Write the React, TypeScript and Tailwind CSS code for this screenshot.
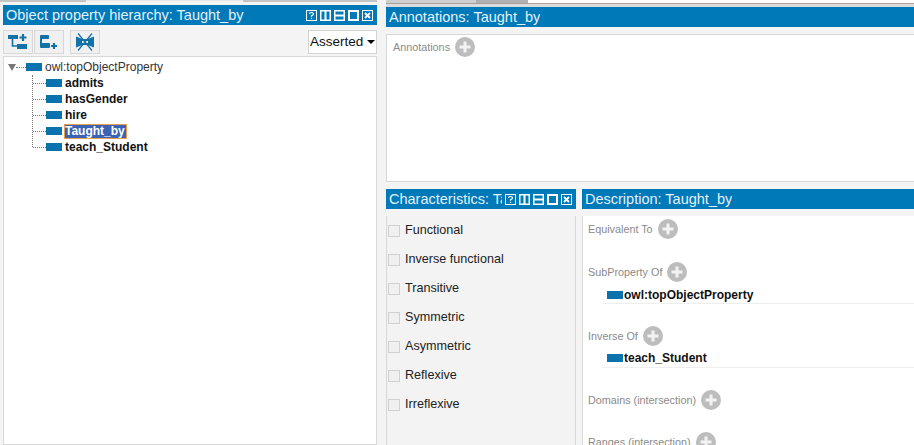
import type { ReactNode } from 'react';

const font = "[font-family:'Liberation_Sans',Arial,sans-serif]";

function PropIcon() {
  return <span className="block w-[16px] h-[8px] bg-[#0a72ad] shrink-0" />;
}

function WindowButtons() {
  return (
    <div className="flex items-center gap-[3px] shrink-0">
      <svg width="11" height="11" viewBox="0 0 11 11">
        <rect x="0.5" y="0.5" width="10" height="10" fill="none" stroke="#fff" />
        <path d="M3.5 4 Q3.5 2.5 5.5 2.5 Q7.5 2.5 7.5 4 Q7.5 5 5.5 5.8 V6.8 M5.5 7.8 V9" fill="none" stroke="#fff" strokeWidth="1.2" />
      </svg>
      <svg width="11" height="11" viewBox="0 0 11 11">
        <rect x="0.75" y="0.75" width="9.5" height="9.5" fill="none" stroke="#fff" strokeWidth="1.5" />
        <rect x="4.5" y="1" width="2" height="9" fill="#fff" />
      </svg>
      <svg width="11" height="11" viewBox="0 0 11 11">
        <rect x="0.75" y="0.75" width="9.5" height="9.5" fill="none" stroke="#fff" strokeWidth="1.5" />
        <rect x="1" y="4.5" width="9" height="2" fill="#fff" />
      </svg>
      <svg width="11" height="11" viewBox="0 0 11 11">
        <rect x="1" y="1" width="9" height="9" fill="none" stroke="#fff" strokeWidth="2" />
      </svg>
      <svg width="11" height="11" viewBox="0 0 11 11">
        <rect x="0.5" y="0.5" width="10" height="10" fill="none" stroke="#fff" />
        <path d="M3 3 L8 8 M8 3 L3 8" stroke="#fff" strokeWidth="1.8" />
      </svg>
    </div>
  );
}

function TitleBar({ title, buttons }: { title: string; buttons?: boolean }) {
  return (
    <div className="h-[20px] bg-[#0079b8] flex items-center justify-between pl-[3px] pr-[4px] gap-[3px] overflow-hidden shrink-0">
      <span className="text-[14.5px] leading-[20px] text-[#e4f1f8] whitespace-nowrap overflow-hidden">{title}</span>
      {buttons && <WindowButtons />}
    </div>
  );
}

function AddButton() {
  return (
    <svg width="20" height="20" viewBox="0 0 20 20" className="shrink-0">
      <circle cx="10" cy="10" r="10" fill="#bdbdbd" />
      <path d="M10 4.5 V15.5 M4.5 10 H15.5" stroke="#f3f3f3" strokeWidth="3" />
    </svg>
  );
}

function SectionLabel({ label }: { label: string }) {
  return (
    <div className="flex items-center gap-[5px] h-[20px]">
      <span className="pt-[1px] text-[10.8px] text-[#8a8a8a] whitespace-nowrap">{label}</span>
      <AddButton />
    </div>
  );
}

function ToolButton({ children }: { children: ReactNode }) {
  return (
    <div className="w-[30px] h-[24px] bg-[#f0f0f0] border border-[#d8d8d8] flex items-center justify-center">
      {children}
    </div>
  );
}

function TreeRow({ label, selected }: { label: string; selected?: boolean }) {
  return (
    <div className="flex items-center h-[16px]">
      <span className="w-[13px] border-t border-dotted border-[#777]" />
      <PropIcon />
      <span
        className={
          selected
            ? 'ml-[2px] pr-[1px] h-[15px] leading-[13px] bg-[#3a62b5] border border-[#e9a04a] text-white font-bold text-[12px]'
            : 'ml-[2px] px-[1px] font-bold text-[12px] leading-[14px] text-[#111]'
        }
      >
        {label}
      </span>
    </div>
  );
}

function AssertionRow({ label, pad }: { label: string; pad: string }) {
  return (
    <div className={`flex items-center h-[22px] ml-[15px] pl-[4px] border-b border-[#eeeeee] ${pad}`}>
      <PropIcon />
      <span className="ml-[1px] text-[12px] font-bold text-[#111] whitespace-nowrap">{label}</span>
    </div>
  );
}

const characteristics = ['Functional', 'Inverse functional', 'Transitive', 'Symmetric', 'Asymmetric', 'Reflexive', 'Irreflexive'];

export default function App() {
  return (
    <div className={`w-[914px] h-[445px] overflow-hidden bg-[#f4f4f4] flex ${font}`}>
      {/* left view */}
      <div className="w-[377px] pl-[3px] flex flex-col shrink-0">
        <div className="h-[5px] flex items-start -ml-[3px] shrink-0">
          <span className="w-[86px] h-[2px] bg-[#c4c4c4]" />
          <span className="w-[157px] h-[1px] bg-[#e8e8e8]" />
          <span className="flex-1 h-[2px] bg-[#c4c4c4]" />
        </div>
        <TitleBar title="Object property hierarchy: Taught_by" buttons />
        <div className="flex items-center justify-between h-[31px] pt-[3px] shrink-0">
          <div className="flex items-center gap-[1px]">
            <ToolButton>
              <svg width="20" height="16" viewBox="0 0 20 16">
                <rect x="0" y="1" width="10" height="4" fill="#1272a8" />
                <path d="M4.5 5 V12 H10" fill="none" stroke="#1272a8" strokeWidth="1.6" />
                <rect x="9" y="10" width="10" height="5" fill="#1272a8" />
                <path d="M15 0 V7 M11.5 3.5 H18.5" stroke="#1272a8" strokeWidth="2.2" />
              </svg>
            </ToolButton>
            <ToolButton>
              <svg width="20" height="16" viewBox="0 0 20 16">
                <rect x="1" y="1" width="9" height="4" rx="1" fill="#1272a8" />
                <path d="M2 3 V11" stroke="#1272a8" strokeWidth="2" />
                <rect x="1" y="9" width="10" height="5" rx="1" fill="#1272a8" />
                <path d="M15 9 V15 M12 12 H18" stroke="#1272a8" strokeWidth="2.2" />
              </svg>
            </ToolButton>
            <div className="ml-[5px]">
              <ToolButton>
                <svg width="18" height="18" viewBox="0 0 18 18">
                  <path d="M1 5 L6 7 H12 L17 5 V13 L12 11 H6 L1 13 Z" fill="none" stroke="#1272a8" strokeWidth="2.2" />
                  <path d="M1 5 V13 L6 11 V7 Z M17 5 V13 L12 11 V7 Z" fill="#1272a8" />
                  <path d="M2 0.5 L16 17.5 M16 0.5 L2 17.5" stroke="#1272a8" strokeWidth="1.2" />
                </svg>
              </ToolButton>
            </div>
          </div>
          <div className="w-[69px] h-[24px] bg-white border border-[#d4d4d4] flex items-center justify-between pl-[1px] pr-[1px]">
            <span className="text-[13.5px] text-[#111]">Asserted</span>
            <span className="w-0 h-0 border-x-[4px] border-x-transparent border-t-[4px] border-t-black" />
          </div>
        </div>
        <div className="flex-1 bg-white border border-[#d8d8d8] pl-[4px] pt-[2px]">
          <div className="flex items-center h-[16px]">
            <span className="w-0 h-0 border-x-[4px] border-x-transparent border-t-[7px] border-t-[#777]" />
            <span className="w-[10px] border-t border-dotted border-[#777]" />
            <PropIcon />
            <span className="ml-[3px] text-[12px] text-[#333]">owl:topObjectProperty</span>
          </div>
          <div className="ml-[24px] border-l border-dotted border-[#777] h-[72px] w-fit">
            <TreeRow label="admits" />
            <TreeRow label="hasGender" />
            <TreeRow label="hire" />
            <TreeRow label="Taught_by" selected />
            <TreeRow label="teach_Student" />
          </div>
        </div>
      </div>

      {/* right views */}
      <div className="flex-1 min-w-0 pl-[9px] flex flex-col">
        <div className="h-[7px] flex flex-col shrink-0">
          <div className="h-[3px] flex shrink-0">
            <span className="w-[90px] bg-[#cfcfcf]" />
            <span className="w-[52px] bg-[#b0b0b0]" />
            <span className="flex-1 bg-white" />
          </div>
          <div className="h-[1px] bg-[#a8a0a0] shrink-0" />
          <div className="flex-1 bg-[#dcdcdc]" />
        </div>
        <TitleBar title="Annotations: Taught_by" />
        <div className="h-[148px] bg-white border border-[#d8d8d8] border-r-0 mt-[7px] pl-[6px] pt-[2px] shrink-0">
          <SectionLabel label="Annotations" />
        </div>
        <div className="flex flex-1 min-h-0 mt-[7px] gap-[6px]">
          <div className="w-[190px] shrink-0 flex flex-col">
            <TitleBar title="Characteristics: Taught_by" buttons />
            <div className="flex-1 mt-[7px] pt-[1px] border-l border-r border-[#d8d8d8] bg-[#f3f3f3] flex flex-col gap-[2px]">
              {characteristics.map((c) => (
                <div key={c} className="flex items-center h-[27px] pl-[1px]">
                  <span className="w-[12px] h-[12px] border border-[#d0d0d0] bg-[#f0f0f0] shrink-0" />
                  <span className="ml-[5px] text-[12.6px] text-[#222]">{c}</span>
                </div>
              ))}
            </div>
          </div>
          <div className="flex-1 min-w-0 flex flex-col">
            <TitleBar title="Description: Taught_by" />
            <div className="flex-1 mt-[7px] bg-white border-l border-[#d8d8d8] pl-[5px] pt-[3px]">
              <SectionLabel label="Equivalent To" />
              <div className="mt-[23px]"><SectionLabel label="SubProperty Of" /></div>
              <AssertionRow label="owl:topObjectProperty" pad="pt-[4px]" />
              <div className="mt-[22px]"><SectionLabel label="Inverse Of" /></div>
              <AssertionRow label="teach_Student" pad="pt-[3px]" />
              <div className="mt-[22px]"><SectionLabel label="Domains (intersection)" /></div>
              <div className="mt-[22px]"><SectionLabel label="Ranges (intersection)" /></div>
            </div>
          </div>
        </div>
      </div>
    </div>
  );
}
